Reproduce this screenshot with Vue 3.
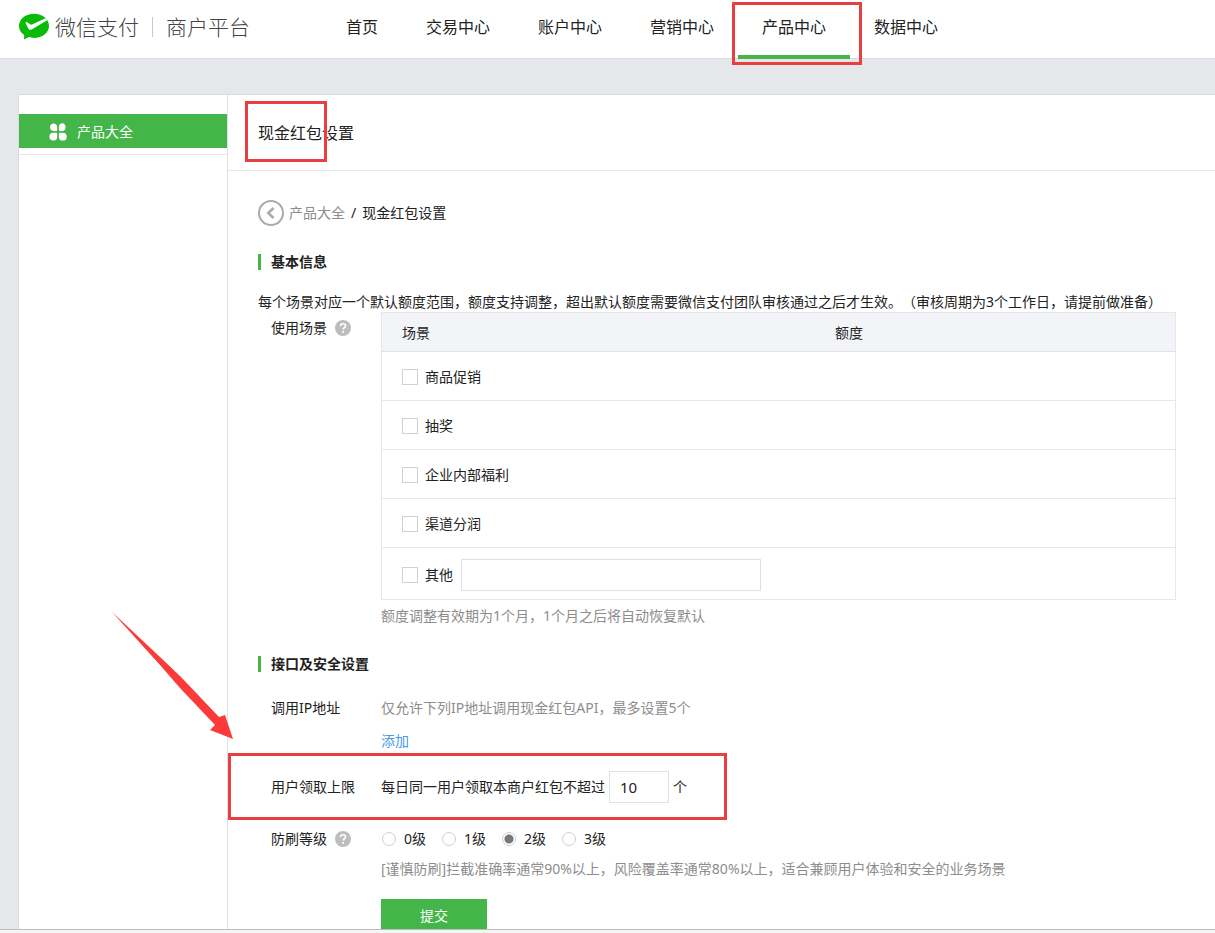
<script setup>
import { ref } from 'vue'

const navItems = ['首页', '交易中心', '账户中心', '营销中心', '产品中心', '数据中心']
const activeNav = '产品中心'
const scenes = ['商品促销', '抽奖', '企业内部福利', '渠道分润']
const levels = ['0级', '1级', '2级', '3级']

const checked = ref([])
const otherScene = ref('')
const dailyLimit = ref('10')
const level = ref('2级')
</script>

<template>
  <div class="page">
    <header class="header">
      <a class="brand" href="#">
        <svg class="logo" viewBox="0 0 30 27" aria-hidden="true">
          <path fill="#09bb07" d="M15 0.8C6.700.8 0 6.200 0 12.900c0 3.700 2 7 5.200 9.200L5 26.600l4.900-2.500c1.600.5 3.300.8 5.100.8 8.300 0 15-5.400 15-12S23.300.8 15 .8z" />
          <path fill="#fff" d="M6.800 9.300c.6-.5 1.100-.3 1.700.1l3 2.100c.5.3 1 .3 1.500.1L26.700 5.300l1.500 2-15.500 9.100c-1.300.8-2.700.5-3.400-.9L6.700 10.200c-.2-.4-.2-.7.1-.9z" />
        </svg>
        <span class="brand-name">微信支付</span>
        <span class="brand-line"></span>
        <span class="brand-name">商户平台</span>
      </a>
      <nav class="nav">
        <a v-for="item in navItems" :key="item" href="#" class="nav-item" :class="{ active: item === activeNav }">
          {{ item }}
          <span v-if="item === activeNav" class="mark nav-mark"></span>
        </a>
      </nav>
    </header>

    <div class="body">
      <div class="panel">
        <aside class="sidebar">
          <a class="side-item" href="#">
            <svg class="side-icon" viewBox="0 0 18 18" fill="#fff" aria-hidden="true">
              <path d="M4.200 0.500A4 4 0 0 1 8.200 4.500V7a1 1 0 0 1-1 1H4.300A3.800 3.800 0 0 1 4.200.5z" />
              <path d="M13.700.3A4 4 0 0 1 13.700 8H10.900a1 1 0 0 1-1-1V4.200A3.900 3.900 0 0 1 13.700.3z" />
              <path d="M4.300 9.800H7.200a1 1 0 0 1 1 1v2.700a3.900 3.900 0 1 1-3.900-3.700z" />
              <path d="M10.900 9.800h2.800a3.900 3.900 0 1 1-3.800 3.900V10.800a1 1 0 0 1 1-1z" />
            </svg>
            产品大全
          </a>
        </aside>

        <main class="main">
          <div class="title-bar">
            <h1 class="title">现金红包设置<span class="mark title-mark"></span></h1>
          </div>

          <div class="content">
            <div class="crumbs">
              <a class="crumb-back" href="#">
                <svg class="back-icon" viewBox="0 0 26 26" fill="none" stroke="#aaa" aria-hidden="true">
                  <circle cx="13" cy="13" r="12" stroke-width="2" />
                  <path d="M15.500 8L10.300 13l5.200 5" stroke-width="2.500" />
                </svg>
                产品大全
              </a>
              <span class="slash">/</span>
              <span>现金红包设置</span>
            </div>

            <h2 class="section">基本信息</h2>
            <p class="intro">每个场景对应一个默认额度范围，额度支持调整，超出默认额度需要微信支付团队审核通过之后才生效。（审核周期为3个工作日，请提前做准备）</p>

            <div class="row">
              <div class="label scene-label">
                使用场景
                <svg class="help" viewBox="0 0 16 16" aria-hidden="true">
                  <circle cx="8" cy="8" r="8" fill="#bdbdbd" />
                  <path d="M5.500 6.300C5.500 4.600 6.600 3.700 8 3.700s2.500.9 2.500 2.200c0 1.800-2.400 1.900-2.400 3.700" fill="none" stroke="#fff" stroke-width="1.600" />
                  <rect x="7.200" y="11" width="1.800" height="1.800" fill="#fff" />
                </svg>
              </div>
              <div class="field">
                <table class="scenes">
                  <thead>
                    <tr><th class="col-scene">场景</th><th>额度</th></tr>
                  </thead>
                  <tbody>
                    <tr v-for="scene in scenes" :key="scene">
                      <td>
                        <label class="check"><input v-model="checked" type="checkbox" :value="scene">{{ scene }}</label>
                      </td>
                      <td></td>
                    </tr>
                    <tr>
                      <td>
                        <div class="other-line">
                          <label class="check"><input v-model="checked" type="checkbox" value="其他">其他</label>
                          <input v-model="otherScene" class="text other-input" type="text" aria-label="其他">
                        </div>
                      </td>
                      <td></td>
                    </tr>
                  </tbody>
                </table>
                <p class="hint table-hint">额度调整有效期为1个月，1个月之后将自动恢复默认</p>
              </div>
            </div>

            <h2 class="section second">接口及安全设置</h2>

            <div class="row ip-row">
              <div class="label">调用IP地址</div>
              <div class="field">
                <p class="hint">仅允许下列IP地址调用现金红包API，最多设置5个</p>
                <a class="add" href="#">添加</a>
              </div>
            </div>

            <div class="row limit-row">
              <label class="label" for="limit">用户领取上限</label>
              <div class="field limit">
                <span>每日同一用户领取本商户红包不超过</span>
                <input id="limit" v-model="dailyLimit" class="text limit-input" type="text">
                <span>个</span>
              </div>
              <span class="mark limit-mark"></span>
              <svg class="arrow" viewBox="0 0 124 130" aria-hidden="true">
                <path d="M1 1L49 46 70 66 108 106 114 104 122 128 99 119 104 114 69 77 49 54z" fill="#fb3a3a" />
              </svg>
            </div>

            <div class="row level-row">
              <div id="level-label" class="label">
                防刷等级
                <svg class="help" viewBox="0 0 16 16" aria-hidden="true">
                  <circle cx="8" cy="8" r="8" fill="#bdbdbd" />
                  <path d="M5.500 6.300C5.500 4.600 6.600 3.700 8 3.700s2.500.9 2.500 2.200c0 1.800-2.400 1.900-2.400 3.700" fill="none" stroke="#fff" stroke-width="1.600" />
                  <rect x="7.200" y="11" width="1.800" height="1.800" fill="#fff" />
                </svg>
              </div>
              <div class="field">
                <div class="levels" role="radiogroup" aria-labelledby="level-label">
                  <label v-for="item in levels" :key="item" class="radio">
                    <input v-model="level" type="radio" name="level" :value="item">{{ item }}
                  </label>
                </div>
                <p class="hint level-hint">[谨慎防刷]拦截准确率通常90%以上，风险覆盖率通常80%以上，适合兼顾用户体验和安全的业务场景</p>
                <button class="submit" type="button">提交</button>
              </div>
            </div>
          </div>
        </main>
      </div>
    </div>
    <div class="bottom-edge"></div>
  </div>
</template>

<style>
body {
  background: #e5e7eb;
}
</style>

<style scoped>
.page {
  display: flex;
  flex-direction: column;
  height: 100vh;
  color: #222;
  font: 14px/20px "Noto Sans", "Noto Sans CJK SC", sans-serif;
  text-spacing-trim: space-all;
}
.page * {
  box-sizing: border-box;
}
a {
  color: inherit;
  text-decoration: none;
}
p, h1, h2 {
  margin: 0;
}
.header {
  position: relative;
  z-index: 1;
  flex: none;
  display: flex;
  height: 59px;
  background: #fff;
  border-bottom: 1px solid #d9dbe0;
}
.brand {
  display: flex;
  align-items: center;
  flex: none;
  width: 322px;
  padding: 0 0 5px 19px;
  color: #444;
}
.logo {
  width: 30px;
  height: 27px;
  margin-right: 6px;
}
.brand-name {
  font-size: 21px;
  line-height: 28px;
  font-weight: 300;
}
.brand-line {
  width: 1px;
  height: 20px;
  margin: 0 13px;
  background: #c8c8c8;
}
.nav {
  display: flex;
}
.nav-item {
  position: relative;
  padding: 0 24px;
  font-size: 16px;
  line-height: 54px;
  white-space: nowrap;
}
.nav-item.active::after {
  content: "";
  position: absolute;
  left: 0;
  right: 0;
  bottom: -1px;
  height: 4px;
  background: #44b549;
}
.mark {
  position: absolute;
  border: 3px solid #ea3f40;
  pointer-events: none;
}
.nav-mark {
  inset: 2px -12px -7px -6px;
}
.body {
  flex: 1;
  min-height: 0;
  overflow: hidden;
  padding: 35px 0 0 18px;
}
.panel {
  display: flex;
  min-height: 100%;
  background: #fff;
  border: solid #d9dbe0;
  border-width: 1px 0 0 1px;
}
.sidebar {
  flex: none;
  width: 209px;
  padding-top: 19px;
  border-right: 1px solid #e0e1e6;
}
.side-item {
  display: flex;
  align-items: center;
  gap: 10px;
  height: 34px;
  padding: 2px 30px 0;
  color: #fff;
  background: #44b549;
}
.side-icon {
  width: 18px;
  height: 18px;
}
.sidebar::after {
  content: "";
  display: block;
  margin-top: 6px;
  border-top: 1px solid #e7e7eb;
}
.main {
  flex: 1;
  min-width: 0;
}
.title-bar {
  display: flex;
  align-items: center;
  height: 76px;
  padding-left: 30px;
  border-bottom: 1px solid #e7e7eb;
}
.title {
  position: relative;
  font-size: 16px;
  line-height: 24px;
  font-weight: 400;
}
.title-mark {
  inset: -20px 27px -17px -13px;
}
.content {
  padding: 29px 39px 0 30px;
}
.crumbs {
  display: flex;
  align-items: center;
}
.crumb-back {
  display: flex;
  align-items: center;
  gap: 5px;
  color: #8d8d8d;
}
.back-icon {
  width: 26px;
  height: 26px;
}
.slash {
  margin: 0 6px;
}
.section {
  margin-top: 28px;
  padding-left: 10px;
  border-left: 3px solid #44b549;
  font-size: 14px;
  line-height: 16px;
  font-weight: 700;
}
.section.second {
  margin-top: 30px;
}
.intro {
  margin-top: 22px;
}
.row {
  position: relative;
  display: flex;
}
.label {
  display: flex;
  align-items: center;
  gap: 8px;
  flex: none;
  width: 123px;
  height: 20px;
  padding-left: 13px;
}
.scene-label {
  margin-top: 6px;
}
.help {
  width: 16px;
  height: 16px;
}
.field {
  flex: 1;
  min-width: 0;
}
.scenes {
  width: 100%;
  border: 1px solid #e7e7eb;
  border-spacing: 0;
  table-layout: fixed;
}
th {
  height: 39px;
  padding: 2px 20px 0;
  background: #f3f4f8;
  border-bottom: 1px solid #e0e1e6;
  font-weight: 400;
  text-align: left;
}
.col-scene {
  width: 54.6%;
}
td {
  height: 49px;
  padding: 2px 20px 0;
  border-bottom: 1px solid #e7e7eb;
}
tr:last-child td {
  height: 51px;
  border-bottom: 0;
}
.check, .radio, .other-line {
  display: flex;
  align-items: center;
}
.check {
  gap: 7px;
}
.other-line {
  gap: 8px;
}
.check input, .radio input {
  appearance: none;
  flex: none;
  margin: 0;
  background: #fff;
  border: 1px solid #d0d1d4;
}
.check input {
  width: 16px;
  height: 16px;
}
.check input:checked {
  background: #44b549;
}
.text {
  height: 32px;
  padding: 0 10px;
  color: #222;
  background: #fff;
  border: 1px solid #e0e1e6;
  font: inherit;
}
.other-input {
  width: 300px;
}
.hint {
  color: #8d8d8d;
}
.table-hint {
  margin-top: 6px;
}
.ip-row {
  margin-top: 26px;
}
.add {
  display: block;
  width: 28px;
  margin-top: 13px;
  color: #459ae9;
}
.limit-row {
  align-items: center;
  margin-top: 20px;
}
.limit {
  display: flex;
  align-items: center;
  gap: 4px;
}
.limit-input {
  width: 60px;
  font-size: 15px;
}
.limit-mark {
  left: -30px;
  top: -18px;
  width: 499px;
  height: 67px;
}
.arrow {
  position: absolute;
  left: -147px;
  top: -160px;
  width: 124px;
  height: 130px;
  pointer-events: none;
}
.level-row {
  margin-top: 26px;
}
.levels {
  display: flex;
  gap: 16px;
  padding-left: 1px;
}
.radio {
  gap: 8px;
}
.radio input {
  width: 14px;
  height: 14px;
  border-radius: 50%;
}
.radio input:checked {
  background: radial-gradient(circle, #777 4px, #fff 5px);
}
.level-hint {
  margin-top: 10px;
}
.submit {
  display: block;
  width: 106px;
  height: 34px;
  margin-top: 20px;
  padding: 0;
  color: #fff;
  background: #44b549;
  border: 0;
  font: inherit;
}
.bottom-edge {
  flex: none;
  height: 4px;
  background: #f5f5f5;
  border-top: 1px solid #bdbdbd;
}
</style>
